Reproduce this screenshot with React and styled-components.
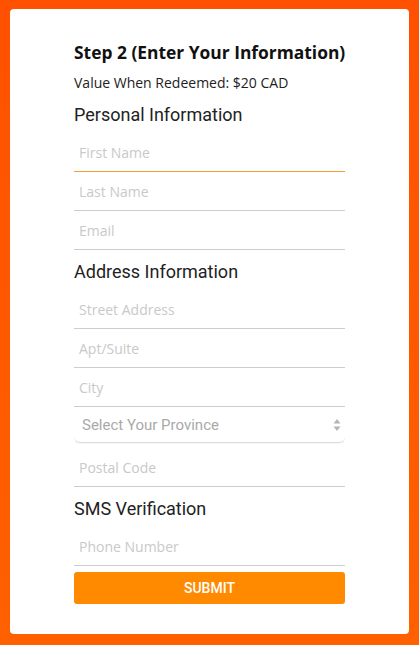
import styled, { createGlobalStyle } from 'styled-components';

const GlobalStyle = createGlobalStyle`
  html, body {
    margin: 0;
    padding: 0;
  }
  body {
    background: linear-gradient(180deg, #ff5100 0%, #ff6000 100%);
    min-height: 645px;
    font-family: "Open Sans", "Liberation Sans", sans-serif;
  }
`;

const Page = styled.div`
  padding: 9px 10px 11px 10px;
`;

const Card = styled.form`
  background: #fff;
  border-radius: 4px;
  padding: 31px 64px 30px 64px;
  display: flex;
  flex-direction: column;
`;

const Title = styled.h2`
  margin: 0 0 9px 0;
  font-family: "Open Sans", sans-serif;
  font-weight: 700;
  font-size: 17.4px;
  line-height: 24px;
  color: #111;
  white-space: nowrap;
`;

const Value = styled.p`
  margin: 0;
  font-size: 14px;
  line-height: 20px;
  color: #222;
`;

const SectionHeading = styled.h3`
  margin: 11px 0 7px 0;
  font-family: Roboto, "Liberation Sans", sans-serif;
  font-weight: 400;
  font-size: 18px;
  line-height: 22px;
  color: #222;
`;

const Field = styled.input`
  display: block;
  box-sizing: border-box;
  width: 100%;
  height: 39px;
  padding: 0 5px;
  border: none;
  border-bottom: 1px solid ${(p) => (p.$active ? '#f0a030' : '#cdcdcd')};
  outline: none;
  background: transparent;
  font-family: "Open Sans", sans-serif;
  font-size: 14px;
  color: #333;
  caret-color: #555;

  &::placeholder {
    color: #c9c9c9;
  }

  &:focus {
    border-bottom-color: #f0a030;
  }
`;

const SelectWrap = styled.div`
  position: relative;
  margin-bottom: 5px;
`;

const Select = styled.select`
  display: block;
  box-sizing: border-box;
  width: 100%;
  height: 36px;
  padding: 0 8px;
  border: none;
  border-bottom: 1px solid #dcdcdc;
  border-radius: 6px;
  appearance: none;
  -webkit-appearance: none;
  outline: none;
  background: #fff;
  box-shadow: 0 1px 1px rgba(0, 0, 0, 0.04);
  font-family: Roboto, "Liberation Sans", sans-serif;
  font-size: 15px;
  color: #aaa;
`;

const Arrows = styled.svg`
  position: absolute;
  right: 4px;
  top: 12px;
  pointer-events: none;
`;

const SubmitButton = styled.button`
  margin-top: 6px;
  height: 32px;
  border: none;
  border-radius: 3px;
  background: #ff8a00;
  color: #fff;
  font-family: Roboto, "Liberation Sans", sans-serif;
  font-size: 14px;
  font-weight: 500;
  cursor: pointer;
`;

const App = () => {
  return (
    <>
      <GlobalStyle />
      <Page>
        <Card onSubmit={(e) => e.preventDefault()}>
          <Title>Step 2 (Enter Your Information)</Title>
          <Value>Value When Redeemed: $20 CAD</Value>

          <SectionHeading>Personal Information</SectionHeading>
          <Field $active autoFocus placeholder="First Name" />
          <Field placeholder="Last Name" />
          <Field placeholder="Email" />

          <SectionHeading>Address Information</SectionHeading>
          <Field placeholder="Street Address" />
          <Field placeholder="Apt/Suite" />
          <Field placeholder="City" />
          <SelectWrap>
            <Select defaultValue="">
              <option value="" disabled>Select Your Province</option>
              <option>Ontario</option>
              <option>Quebec</option>
              <option>British Columbia</option>
              <option>Alberta</option>
            </Select>
            <Arrows width="8" height="12" viewBox="0 0 8 12">
              <path d="M4 0 L7.5 4.5 L0.5 4.5 Z" fill="#b5b5b5" />
              <path d="M4 12 L7.5 7.5 L0.5 7.5 Z" fill="#b5b5b5" />
            </Arrows>
          </SelectWrap>
          <Field placeholder="Postal Code" />

          <SectionHeading>SMS Verification</SectionHeading>
          <Field placeholder="Phone Number" />
          <SubmitButton type="submit">SUBMIT</SubmitButton>
        </Card>
      </Page>
    </>
  );
};

export default App;
